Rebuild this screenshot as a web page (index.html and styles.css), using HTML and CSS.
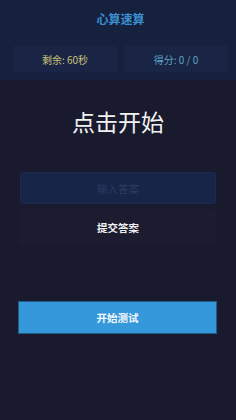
FILE: index.html
```html
<!DOCTYPE html>
<html lang="zh-CN">
<head>
  <meta charset="UTF-8">
  <title>心算速算</title>
  <link rel="stylesheet" href="styles.css">
</head>
<body>
  <div class="app">
    <div class="header">
      <h1 class="title">心算速算</h1>
      <div class="stats">
        <div class="stat time">剩余: 60秒</div>
        <div class="stat score">得分: 0 / 0</div>
      </div>
    </div>

    <div class="question">点击开始</div>

    <div class="answer">
      <input class="answer-input" type="text" placeholder="输入答案" disabled>
      <button class="submit-btn" disabled>提交答案</button>
    </div>

    <button class="start-btn">开始测试</button>
  </div>
</body>
</html>
```

FILE: styles.css
```css
* {
  box-sizing: border-box;
}

body {
  margin: 0;
  background: #1a1a2e;
  font-family: "Noto Sans CJK SC", "Noto Sans", sans-serif;
  height: 100vh;
  overflow: hidden;
}

.app {
  display: flex;
  flex-direction: column;
}

.header {
  background: #16213e;
  padding: 9px 8px 8px 13px;
}

.title {
  margin: 0;
  text-align: center;
  color: #3a8fd0;
  font-size: 12px;
  font-weight: bold;
  line-height: 20px;
}

.stats {
  display: flex;
  gap: 7px;
  margin-top: 17px;
}

.stat {
  flex: 1;
  background: #1a2444;
  height: 26px;
  display: flex;
  align-items: center;
  justify-content: center;
  font-size: 10px;
}

.time {
  color: #c9c37a;
}

.score {
  color: #5aa6c8;
}

.question {
  color: #f2f2f2;
  font-size: 23px;
  text-align: center;
  margin-top: 25px;
  line-height: 32px;
}

.answer {
  display: flex;
  flex-direction: column;
  padding: 0 20px;
  margin-top: 35px;
  gap: 6px;
}

.answer-input {
  height: 32px;
  background: #172548;
  border: 1px solid #1a2a52;
  border-radius: 3px;
  text-align: center;
  font-family: inherit;
  font-size: 10.5px;
  color: #2c3e66;
}

.answer-input::placeholder {
  color: #2c3c60;
}

.submit-btn {
  height: 34px;
  background: #1c1c31;
  border: 1px solid #1e1e33;
  border-radius: 3px;
  color: #f0f0f0;
  font-family: inherit;
  font-size: 10.5px;
  font-weight: bold;
}

.start-btn {
  margin: 57px 19px 0 18px;
  height: 33px;
  background: #3498db;
  border: 1px solid #1f5c88;
  color: #f4f8fc;
  font-family: inherit;
  font-size: 10.5px;
  font-weight: bold;
}
```
